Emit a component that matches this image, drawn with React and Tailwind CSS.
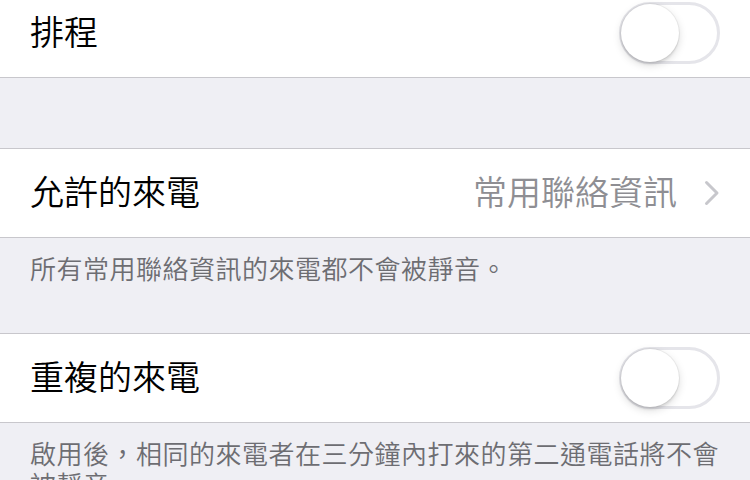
import React from 'react';

const font = { fontFamily: '"Noto Sans CJK TC", "Noto Sans", sans-serif' };

const Toggle = () => (
  <div className="relative w-[101px] h-[62px] rounded-full border-[3px] border-[#e5e5ea] bg-white">
    <div className="absolute left-[-1px] top-[-1px] w-[58px] h-[58px] rounded-full bg-white shadow-[0_3px_8px_rgba(0,0,0,0.15),0_3px_2px_rgba(0,0,0,0.06),0_0_0_1px_rgba(0,0,0,0.05)]" />
  </div>
);

const Chevron = () => (
  <svg width="16" height="26" viewBox="0 0 16 26" className="ml-[27px]">
    <path d="M2.5 2.5 L13 13 L2.5 23.5" fill="none" stroke="#c7c7cc" strokeWidth="3" strokeLinecap="round" strokeLinejoin="round" />
  </svg>
);

const Title = ({ children, className = 'text-black' }) => (
  <span className={`text-[34px] leading-[40px] font-[350] mb-[4px] ${className}`}>{children}</span>
);

const Footer = ({ children, className = '' }) => (
  <div className={`pt-[14px] pl-[30px] pr-[24px] text-[26px] leading-[31px] tracking-[0.5px] font-[350] text-[#6d6d72] ${className}`}>
    {children}
  </div>
);

export default function App() {
  return (
    <div className="w-[750px] h-[480px] overflow-hidden bg-[#efeff4]" style={font}>
      <div className="-mt-[11px]">
        {/* 排程 */}
        <div className="h-[89px] bg-white border-b border-[#c8c7cc] flex items-center justify-between pl-[30px] pr-[30px]">
          <Title>排程</Title>
          <Toggle />
        </div>

        <div className="h-[70px]" />

        {/* 允許的來電 */}
        <div className="h-[90px] bg-white border-y border-[#c8c7cc] flex items-center justify-between pl-[30px] pr-[30px]">
          <Title>允許的來電</Title>
          <div className="flex items-center">
            <Title className="text-[#8e8e93]">常用聯絡資訊</Title>
            <Chevron />
          </div>
        </div>

        <Footer className="h-[95px]">所有常用聯絡資訊的來電都不會被靜音。</Footer>

        {/* 重複的來電 */}
        <div className="h-[90px] bg-white border-y border-[#c8c7cc] flex items-center justify-between pl-[30px] pr-[30px]">
          <Title>重複的來電</Title>
          <Toggle />
        </div>

        <Footer>啟用後，相同的來電者在三分鐘內打來的第二通電話將不會被靜音。</Footer>
      </div>
    </div>
  );
}
